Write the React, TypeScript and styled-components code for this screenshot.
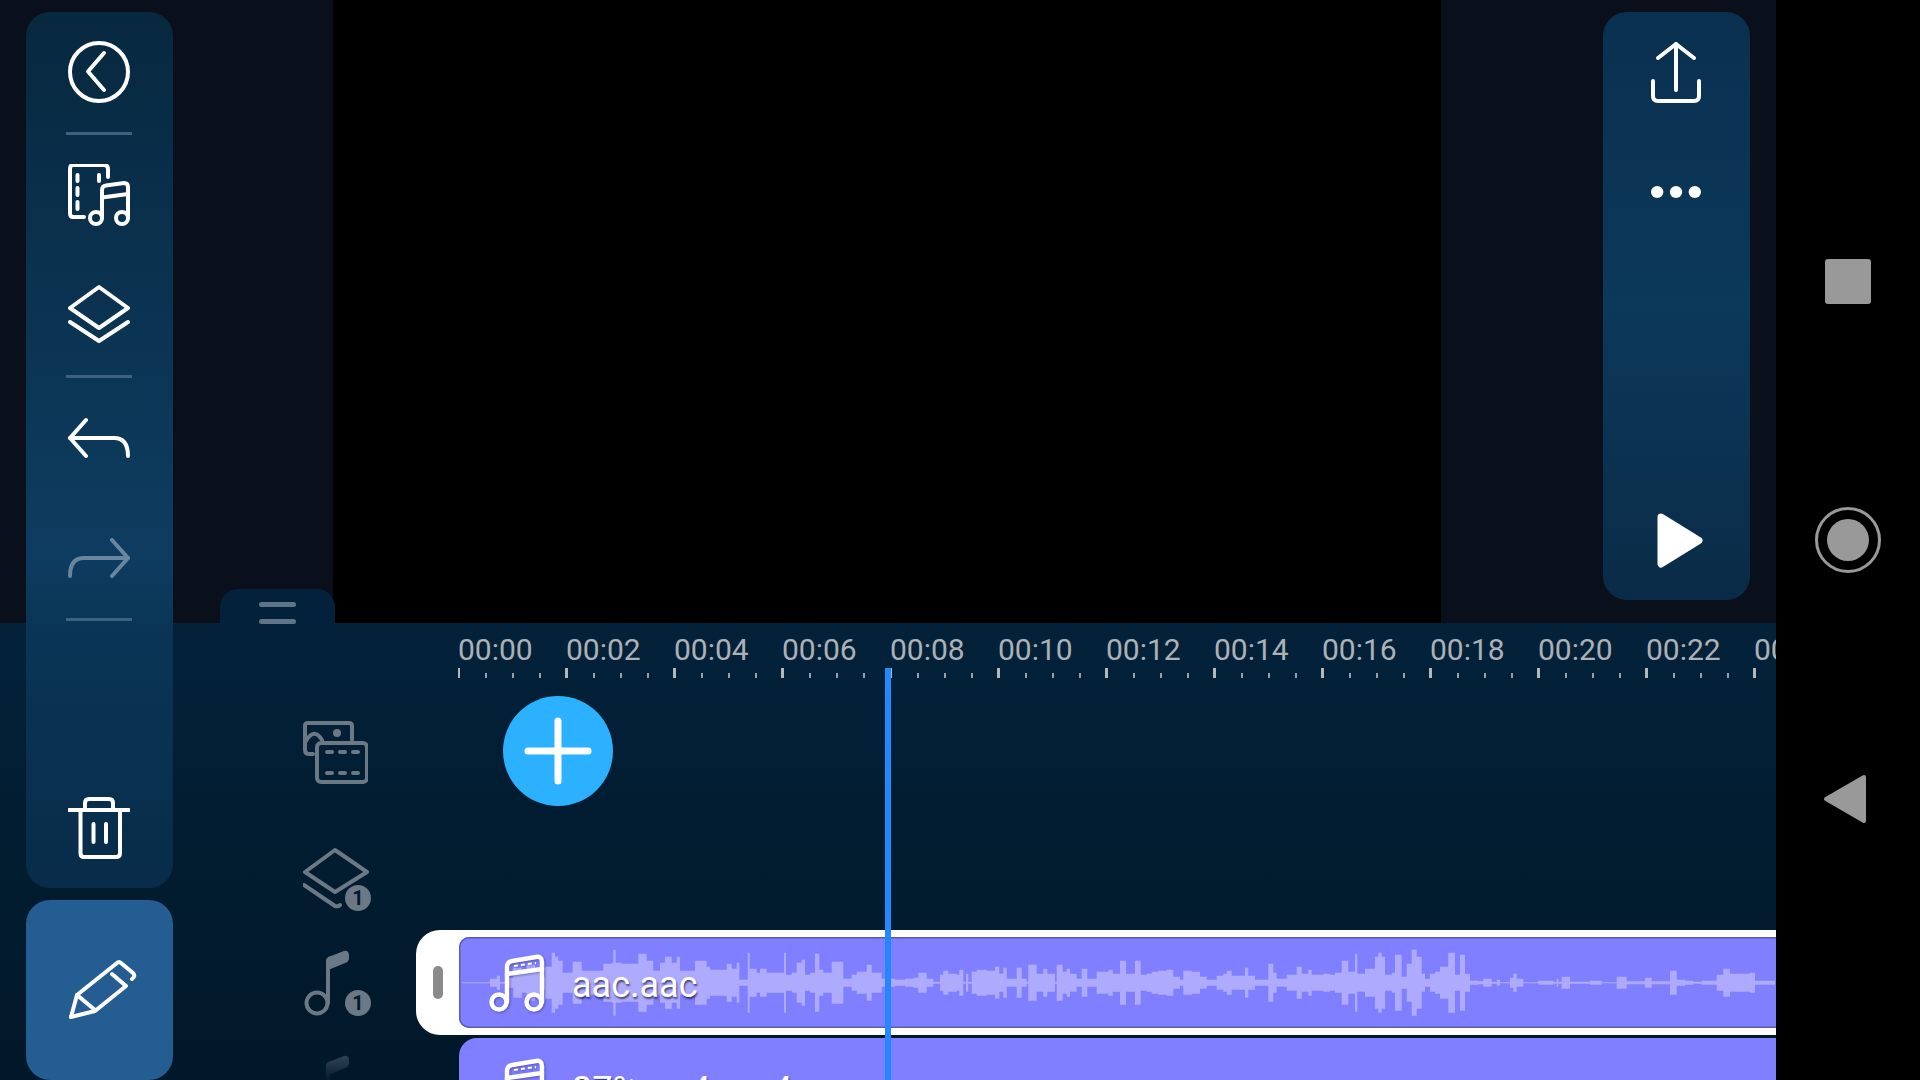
import React from "react";
import styled, { createGlobalStyle } from "styled-components";

const GlobalStyle = createGlobalStyle`
  html, body { margin: 0; padding: 0; background: #000; overflow: hidden; }
  * { box-sizing: border-box; }
`;

const Page = styled.div`
  width: 1920px;
  height: 1080px;
  display: flex;
  overflow: hidden;
  font-family: Roboto, "Liberation Sans", sans-serif;
`;

const Editor = styled.main`
  width: 1776px;
  height: 1080px;
  display: grid;
  grid-template-columns: 26px 147px 1fr;
  grid-template-rows: 623px 457px;
`;

const Preview = styled.section`
  grid-area: 1 / 1 / 2 / 4;
  display: flex;
  align-items: flex-end;
  background: #0a0f1c;
`;

const MenuTab = styled.div`
  width: 115px;
  height: 34px;
  margin-left: 220px;
  padding-top: 13px;
  display: flex;
  flex-direction: column;
  align-items: center;
  gap: 12px;
  border-radius: 18px 18px 0 0;
  background: #03213a;
  z-index: 1;
`;

const MenuBar = styled.span`
  width: 37px;
  height: 5px;
  flex: none;
  border-radius: 3px;
  background: #5f7486;
`;

const Screen = styled.div`
  width: 1108px;
  height: 623px;
  margin-left: -2px;
  background: #000;
`;

const RightRail = styled.aside`
  width: 147px;
  height: 588px;
  margin: 12px 0 0 162px;
  align-self: flex-start;
  display: flex;
  flex-direction: column;
  justify-content: flex-start;
  border-radius: 24px;
  background: linear-gradient(180deg, #0a304f 0%, #0c385a 50%, #0a2b47 100%);
`;

const LeftColumn = styled.div`
  grid-area: 1 / 2 / 3 / 3;
  display: flex;
  flex-direction: column;
  gap: 12px;
  padding-top: 12px;
  z-index: 2;
`;

const LeftRail = styled.nav`
  height: 876px;
  display: flex;
  flex-direction: column;
  border-radius: 24px;
  background: linear-gradient(180deg, #07283f 0%, #0e3c60 62%, #0a3556 70%, #082c49 100%);
`;

const Slot = styled.div`
  height: 120px;
  flex: none;
  padding-right: 2px;
  display: flex;
  align-items: center;
  justify-content: center;
`;

const BottomSlot = styled(Slot)`
  margin-top: auto;
`;

const SlotSpacer = styled.div`
  flex: 1;
`;

const RailDivider = styled.div`
  width: 66px;
  height: 3px;
  margin-left: 40px;
  flex: none;
  background: #3f6180;
`;

const EditButton = styled.div`
  height: 180px;
  padding-left: 7px;
  display: flex;
  align-items: center;
  justify-content: center;
  border-radius: 24px;
  background: #245d92;
`;

const Icon = styled.svg<{ $dim?: boolean }>`
  display: block;
  flex: none;
  fill: none;
  stroke: #fff;
  stroke-width: 4;
  stroke-linecap: round;
  stroke-linejoin: round;
  opacity: ${(p) => (p.$dim ? 0.38 : 1)};
`;

const PlayGlyph = styled(Icon)`
  margin-left: 9px;
`;

const BackGlyph = styled(Icon)`
  margin-right: 7px;
`;

const Timeline = styled.section`
  grid-area: 2 / 1 / 3 / 4;
  position: relative;
  display: flex;
  overflow: hidden;
  background: linear-gradient(180deg, #03223a 0%, #021d32 40%, #011829 100%);
`;

const Sidebar = styled.div`
  width: 416px;
  flex: none;
  padding: 98px 0 0 303px;
`;

const SideSlot = styled.div<{ $h: number }>`
  position: relative;
  height: ${(p) => p.$h}px;
`;

const SideIcon = styled.svg`
  display: block;
  fill: none;
  stroke: #6b7885;
  stroke-width: 4;
  stroke-linecap: round;
  stroke-linejoin: round;
`;

const FadedNote = styled(SideIcon)`
  mask-image: linear-gradient(180deg, rgba(0, 0, 0, 0.5) 0, transparent 30px);
`;

const Badge = styled.span<{ $top: number }>`
  position: absolute;
  left: 42px;
  top: ${(p) => p.$top}px;
  width: 26px;
  height: 26px;
  display: flex;
  align-items: center;
  justify-content: center;
  border-radius: 50%;
  background: #6b7885;
  color: #02192d;
  font-size: 20px;
  font-weight: 700;
  line-height: 1;
`;

const TrackArea = styled.div`
  flex: 1;
  min-width: 0;
  overflow: hidden;
`;

const Ruler = styled.div`
  display: flex;
  padding: 11px 0 0 42px;
`;

const RulerCell = styled.div`
  width: 108px;
  flex: none;
`;

const RulerLabel = styled.div`
  height: 34px;
  color: #adb1b5;
  font-size: 30px;
  line-height: 32px;
  white-space: nowrap;
`;

const TickRow = styled.div`
  height: 10px;
  display: flex;
  align-items: flex-end;
`;

const TickSlot = styled.div`
  width: 27px;
  height: 10px;
  display: flex;
  align-items: flex-end;
`;

const Tick = styled.span<{ $major?: boolean; $thin?: boolean }>`
  width: ${(p) => (p.$major && !p.$thin ? 3 : 1.5)}px;
  height: ${(p) => (p.$major ? 10 : 5)}px;
  margin-left: ${(p) => (p.$major && !p.$thin ? -1.5 : 0)}px;
  background: ${(p) => (p.$major ? "#b5b8bb" : "#9aa0a5")};
`;

const AddButton = styled.div`
  width: 110px;
  height: 110px;
  margin: 18px 0 0 87px;
  display: flex;
  align-items: center;
  justify-content: center;
  border-radius: 50%;
  background: #2bb1ff;
`;

const SelectedTrack = styled.div`
  height: 105px;
  width: 1400px;
  margin-top: 124px;
  display: flex;
  align-items: center;
  border-radius: 24px 0 0 24px;
  background: #fff;
`;

const Grip = styled.span`
  width: 10px;
  height: 33px;
  margin: 0 16px 0 17px;
  flex: none;
  border-radius: 5px;
  background: #8a8a8a;
`;

const Clip = styled.div<{ $selected?: boolean }>`
  position: relative;
  height: ${(p) => (p.$selected ? 91 : 98)}px;
  flex: 1;
  display: flex;
  align-items: center;
  gap: 25px;
  padding-left: 30px;
  overflow: hidden;
  background: #7f7fff;
  border-radius: ${(p) => (p.$selected ? "10px 0 0 10px" : "18px 0 0 0")};
  ${(p) => (p.$selected ? "box-shadow: inset 0 0 0 1.5px #5c5ca8;" : "")}
`;

const NextClip = styled(Clip)`
  width: 1400px;
  margin: 3px 0 0 43px;
  flex: none;
`;

const Wave = styled.svg`
  position: absolute;
  left: 0;
  top: 0;
`;

const WavePath = styled.path`
  fill: #aeabff;
`;

const NoteGlyph = styled.svg`
  position: relative;
  display: block;
  flex: none;
  fill: none;
  stroke: #fff;
  stroke-width: 4.5;
  stroke-linecap: round;
  stroke-linejoin: round;
  filter: drop-shadow(1px 1px 1px rgba(0, 0, 40, 0.35));
`;

const ClipName = styled.span`
  position: relative;
  color: #fff;
  font-size: 36px;
  line-height: 1;
  margin-top: 5px;
  white-space: nowrap;
  text-shadow: 1px 2px 2px rgba(0, 0, 30, 0.6);
`;

const Playhead = styled.div`
  position: absolute;
  left: 885px;
  top: 45px;
  bottom: 0;
  width: 6px;
  background: #2188ff;
  z-index: 1;
`;

const SystemBar = styled.div`
  width: 144px;
  height: 1080px;
  display: flex;
  flex-direction: column;
  align-items: center;
  justify-content: center;
  background: #000;
`;

const SystemSlot = styled.div`
  height: 259px;
  flex: none;
  display: flex;
  align-items: center;
  justify-content: center;
`;

const StopKey = styled.div`
  width: 46px;
  height: 45px;
  border-radius: 3px;
  background: #999;
`;

const HomeKey = styled.div`
  width: 66px;
  height: 66px;
  display: flex;
  align-items: center;
  justify-content: center;
  border: 3px solid #999;
  border-radius: 50%;
`;

const HomeDot = styled.span`
  width: 42px;
  height: 42px;
  border-radius: 50%;
  background: #999;
`;

type Seg = [number, number];
const waveParts: { origin: number; segs: Seg[] }[] = [
  {
    origin: 480,
    segs: [
      [30, 0.5], [50, 4], [60, 7], [85, 1], [100, 5], [125, 15], [140, 10], [165, 18], [190, 12],
      [195, 6], [215, 16], [225, 30], [235, 26], [248, 22], [262, 10], [278, 10], [305, 21], [330, 12], [370, 12],
      [395, 19], [400, 20], [407, 33], [425, 20], [475, 19], [500, 29], [520, 22], [540, 12], [555, 20], [575, 26],
      [590, 20], [600, 26], [645, 12], [680, 22], [690, 16], [740, 13], [755, 19], [770, 14], [778, 20], [790, 3],
      [803, 3], [809, 30], [830, 14], [840, 10], [860, 14], [890, 10], [912, 10], [918, 30], [935, 8], [950, 10],
      [965, 20], [975, 23], [990, 8], [1005, 10], [1018, 29], [1030, 13], [1055, 10], [1090, 21], [1115, 4], [1130, 8],
      [1160, 11], [1175, 18], [1205, 10], [1215, 4],
    ],
  },
  {
    origin: 890,
    segs: [
      [15, 4], [45, 3], [70, 4], [85, 5], [110, 10], [130, 4], [150, 1], [160, 8], [175, 12], [200, 9], [208, 8], [220, 13],
      [228, 1], [235, 9], [245, 1], [260, 11], [290, 13], [315, 12], [328, 16], [340, 9], [350, 15], [380, 4], [395, 15],
      [410, 4], [415, 1], [440, 18], [460, 9], [472, 14], [495, 9], [500, 1], [518, 18], [530, 11], [540, 14], [560, 9],
      [575, 4], [592, 14], [620, 4], [655, 11], [668, 13], [690, 9], [708, 22], [735, 9], [752, 22], [770, 8], [785, 9],
      [805, 11], [830, 12], [850, 13], [870, 6], [880, 3], [905, 12], [930, 11], [950, 6], [980, 3], [1000, 7], [1010, 9],
      [1025, 12], [1065, 7], [1075, 15], [1095, 7], [1135, 3], [1150, 19], [1160, 10], [1190, 4], [1220, 8], [1235, 16],
      [1255, 9], [1265, 13], [1300, 8], [1320, 9], [1335, 8], [1355, 10],
    ],
  },
  {
    origin: 1340,
    segs: [
      [25, 22], [45, 11], [52, 29], [75, 9], [105, 14], [115, 26], [125, 30], [135, 26], [155, 8], [165, 10], [185, 28],
      [200, 6], [215, 19], [230, 33], [245, 26], [255, 9], [270, 4], [285, 9], [300, 11], [325, 16], [345, 30], [360, 8],
      [375, 28], [390, 9], [400, 2], [415, 2], [430, 1.5], [455, 4], [470, 1], [480, 3], [510, 0.5], [520, 5], [530, 9],
      [550, 4], [595, 0.5], [640, 2], [650, 1], [655, 4], [665, 1], [690, 6], [750, 1], [785, 2], [830, 0.5], [860, 6],
      [915, 1.5], [935, 5], [990, 1.5], [1010, 12], [1035, 3], [1060, 2], [1085, 1], [1130, 2], [1150, 8], [1170, 14],
      [1230, 9], [1245, 10], [1305, 2],
    ],
  },
];

const buildWavePath = (): string => {
  const centre = 45.7;
  const left = 459;
  const top: string[] = [];
  const bottom: string[] = [];
  let prev = 462 - left;
  waveParts.forEach(({ origin, segs }) => {
    segs.forEach(([end, h]) => {
      const x = +(origin + end / 3 - left).toFixed(1);
      if (x <= prev) return;
      const up = +(centre - h).toFixed(1);
      const down = +(centre + h).toFixed(1);
      top.push(`${prev} ${up}`, `${x} ${up}`);
      bottom.unshift(`${x} ${down}`, `${prev} ${down}`);
      prev = x;
    });
  });
  return `M${[...top, ...bottom].join("L")}Z`;
};

const wavePath = buildWavePath();

const stamps = Array.from({ length: 13 }, (_, i) => `00:${String(i * 2).padStart(2, "0")}`);

const ClipNote = () => (
  <NoteGlyph width={58} height={58} viewBox="0 0 58 58">
    <circle cx={10} cy={48} r={7.5} />
    <circle cx={45} cy={48} r={7.5} />
    <path d="M18 48V13Q18 8 23 7L47 3Q53 2 53 8V48" />
    <path d="M18 20L53 15" />
    <path d="M25 12L47 9" strokeWidth={2} strokeDasharray="4 3" strokeLinecap="butt" />
  </NoteGlyph>
);

const SideNote = () => (
  <>
    <circle cx={14} cy={55} r={10.5} />
    <path d="M25 55V17" />
    <path d="M25 13Q25 11 28 10L41 5Q44 4 44 7V10Q44 12 42 13L25 20Z" fill="#6b7885" />
  </>
);

export default function App() {
  return (
    <Page>
      <GlobalStyle />
      <Editor>
        <Preview>
          <MenuTab>
            <MenuBar />
            <MenuBar />
          </MenuTab>
          <Screen />
          <RightRail>
            <Slot>
              <Icon width={50} height={62} viewBox="0 0 50 62">
                <path d="M25 3V49" />
                <path d="M7 17L25 3L43 17" />
                <path d="M2 40V55Q2 60 7 60H43Q48 60 48 55V40" />
              </Icon>
            </Slot>
            <Slot>
              <Icon width={50} height={14} viewBox="0 0 50 14">
                <ellipse cx={6.2} cy={7} rx={6.2} ry={6} fill="#fff" stroke="none" />
                <ellipse cx={25} cy={7} rx={6.2} ry={6} fill="#fff" stroke="none" />
                <ellipse cx={43.8} cy={7} rx={6.2} ry={6} fill="#fff" stroke="none" />
              </Icon>
            </Slot>
            <SlotSpacer />
            <Slot>
              <PlayGlyph width={46} height={55} viewBox="0 0 46 55">
                <path d="M4 4L42 27.5L4 51Z" fill="#fff" strokeWidth={7} />
              </PlayGlyph>
            </Slot>
          </RightRail>
        </Preview>

        <LeftColumn>
          <LeftRail>
            <Slot>
              <Icon width={62} height={62} viewBox="0 0 62 62">
                <circle cx={31} cy={31} r={29} />
                <path d="M36 12L20 30.5L36 49" />
              </Icon>
            </Slot>
            <RailDivider />
            <Slot>
              <Icon width={62} height={62} viewBox="0 0 62 62">
                <path d="M40 13V5Q40 1 36 1H5Q2 1 2 5V49Q2 53 5 53H16" />
                <path d="M9.5 11V17M9.5 24V31M9.5 38V45M31 11V17" />
                <circle cx={28} cy={54} r={6} />
                <circle cx={54} cy={54} r={6} />
                <path d="M34 54V26Q34 22 38 21.5L56 19Q60 19 60 23V54" />
                <path d="M34 33.5L60 30" />
              </Icon>
            </Slot>
            <Slot>
              <Icon width={62} height={62} viewBox="0 0 62 62">
                <path d="M31 3L60 24L31 44L2 24Z" />
                <path d="M2 38L31 57L60 38" />
              </Icon>
            </Slot>
            <RailDivider />
            <Slot>
              <Icon width={62} height={62} viewBox="0 0 62 62">
                <path d="M18 13L2 31L18 49" />
                <path d="M2 31H46Q60 31 60 49" />
              </Icon>
            </Slot>
            <Slot>
              <Icon $dim width={62} height={62} viewBox="0 0 62 62">
                <path d="M44 13L60 31L44 49" />
                <path d="M60 31H16Q2 31 2 49" />
              </Icon>
            </Slot>
            <RailDivider />
            <BottomSlot>
              <Icon width={62} height={62} viewBox="0 0 62 62">
                <path d="M1 13H61" />
                <path d="M17 13V6Q17 2 21 2H41Q45 2 45 6V13" />
                <path d="M12.5 13V56Q12.5 60 16 60H48Q52 60 52 56V13" />
                <path d="M25.5 27V45M38 27V45" />
              </Icon>
            </BottomSlot>
          </LeftRail>
          <EditButton>
            <Icon width={70} height={62} viewBox="0 0 70 62">
              <path d="M3 58L9 36L49 4Q51 2 53 4L65 14Q68 17 64 20" />
              <path d="M9 36L27 51" />
              <path d="M3 58L27 52L58 27L44 15" />
            </Icon>
          </EditButton>
        </LeftColumn>

        <Timeline>
          <Sidebar>
            <SideSlot $h={127}>
              <SideIcon width={65} height={63} viewBox="0 0 65 63">
                <path d="M49 19V5Q49 2 46 2H5Q2 2 2 5V29Q2 33 6 33H10" />
                <path d="M3 20Q11 6 19 19" />
                <circle cx={34} cy={12} r={4} fill="#6b7885" stroke="none" />
                <rect x={14} y={22} width={50} height={39} rx={4} />
                <path d="M24 31H29M37 31H42M50 31H55M24 52H29M37 52H42M50 52H55" />
              </SideIcon>
            </SideSlot>
            <SideSlot $h={100}>
              <SideIcon width={66} height={62} viewBox="0 0 66 62">
                <path d="M32 2L64 24L32 44L2 24Z" />
                <path d="M1 37L32 58Q35 59 37 57" />
              </SideIcon>
              <Badge $top={37}>1</Badge>
            </SideSlot>
            <SideSlot $h={105}>
              <SideIcon width={50} height={70} viewBox="0 0 50 70">
                <SideNote />
              </SideIcon>
              <Badge $top={42}>1</Badge>
            </SideSlot>
            <SideSlot $h={30}>
              <FadedNote width={50} height={30} viewBox="0 0 50 30">
                <SideNote />
              </FadedNote>
            </SideSlot>
          </Sidebar>

          <TrackArea>
            <Ruler>
              {stamps.map((stamp, i) => (
                <RulerCell key={stamp}>
                  <RulerLabel>{stamp}</RulerLabel>
                  <TickRow>
                    {[0, 1, 2, 3].map((t) => (
                      <TickSlot key={t}>
                        <Tick $major={t === 0} $thin={i === 0} />
                      </TickSlot>
                    ))}
                  </TickRow>
                </RulerCell>
              ))}
            </Ruler>

            <AddButton>
              <Icon width={68} height={68} viewBox="0 0 68 68">
                <path d="M34 4V64M4 34H64" strokeWidth={7} />
              </Icon>
            </AddButton>

            <SelectedTrack>
              <Grip />
              <Clip $selected>
                <Wave width={1317} height={91} viewBox="0 0 1317 91">
                  <WavePath d={wavePath} />
                </Wave>
                <ClipNote />
                <ClipName>aac.aac</ClipName>
              </Clip>
            </SelectedTrack>

            <NextClip>
              <ClipNote />
              <ClipName>27%mp4.mp4</ClipName>
            </NextClip>
          </TrackArea>
          <Playhead />
        </Timeline>
      </Editor>

      <SystemBar>
        <SystemSlot>
          <StopKey />
        </SystemSlot>
        <SystemSlot>
          <HomeKey>
            <HomeDot />
          </HomeKey>
        </SystemSlot>
        <SystemSlot>
          <BackGlyph width={44} height={50} viewBox="0 0 44 50">
            <path d="M3 25L41 3V47Z" fill="#999" stroke="#999" strokeWidth={4} />
          </BackGlyph>
        </SystemSlot>
      </SystemBar>
    </Page>
  );
}
